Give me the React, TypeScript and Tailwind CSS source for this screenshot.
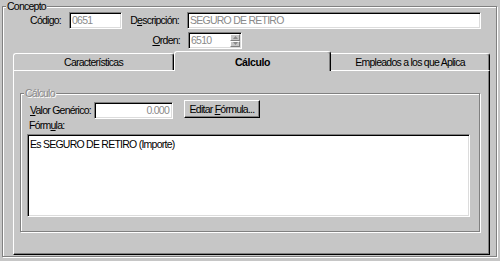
import React from "react";

const font = { fontFamily: '"Liberation Sans", Arial, sans-serif' };

function Sunken({ className = "", children }: { className?: string; children?: React.ReactNode }) {
  return (
    <div
      className={
        "border border-t-[#808080] border-l-[#808080] border-b-white border-r-white shadow-[inset_1px_1px_0_#000,inset_-1px_-1px_0_#dcdcdc] " +
        className
      }
    >
      {children}
    </div>
  );
}

function U({ children }: { children: React.ReactNode }) {
  return <span className="underline underline-offset-[1px]">{children}</span>;
}

export default function App() {
  return (
    <div
      className="w-[500px] h-[261px] bg-[#c6c6c6] pt-[6px] pl-[2px] overflow-hidden text-[10.5px] tracking-[-0.75px] leading-[13px] text-black whitespace-nowrap"
      style={font}
    >
      <div className="relative w-[495px] h-[251px] border border-[#808080] shadow-[1px_1px_0_#fff,inset_1px_1px_0_#fff] pl-[2px]">
        <div className="absolute left-[3px] top-[-7px] bg-[#c6c6c6] px-[1px]">Concepto</div>

        {/* Row 1 */}
        <div className="flex items-center h-[17px] mt-[5px]">
          <div className="w-[56px] text-right">Código:</div>
          <Sunken className="ml-[8px] w-[53px] h-[17px] bg-white text-[#8a8a8a] pl-[2px] flex items-center">0651</Sunken>
          <div className="w-[57px] text-right">
            D<U>e</U>scripción:
          </div>
          <Sunken className="ml-[8px] w-[294px] h-[17px] bg-white text-[#8a8a8a] pl-[2px] flex items-center">
            SEGURO DE RETIRO
          </Sunken>
        </div>

        {/* Row 2 */}
        <div className="flex items-center h-[17px] mt-[3px]">
          <div className="w-[175px] text-right">
            <U>O</U>rden:
          </div>
          <Sunken className="ml-[8px] w-[54px] h-[17px] bg-white flex">
            <div className="flex-1 text-[#8a8a8a] pl-[2px] flex items-center">6510</div>
            <div className="w-[11px] flex flex-col py-[1px] pr-[1px]">
              <div className="flex-1 bg-[#c6c6c6] border border-t-white border-l-white border-b-[#808080] border-r-[#808080] flex items-center justify-center">
                <svg width="5" height="3" viewBox="0 0 5 3">
                  <path d="M2.5 0 L5 3 L0 3 Z" fill="#8a8a8a" />
                </svg>
              </div>
              <div className="flex-1 bg-[#c6c6c6] border border-t-white border-l-white border-b-[#808080] border-r-[#808080] flex items-center justify-center">
                <svg width="5" height="3" viewBox="0 0 5 3">
                  <path d="M0 0 L5 0 L2.5 3 Z" fill="#8a8a8a" />
                </svg>
              </div>
            </div>
          </Sunken>
        </div>

        {/* Tabs */}
        <div className="ml-[8px] mt-[2px]">
          <div className="flex items-end h-[19px] relative z-10">
            <div className="w-[161px] h-[17px] border-l border-t border-white rounded-tl-[3px] rounded-tr-[3px] border-r border-r-black shadow-[inset_-1px_0_0_#808080] flex items-center justify-center">
              Características
            </div>
            <div className="w-[157px] h-[20px] mb-[-1px] bg-[#c6c6c6] border-l border-t border-white rounded-tl-[3px] rounded-tr-[3px] border-r border-r-black shadow-[inset_-1px_0_0_#808080] flex items-center justify-center font-bold tracking-[-0.4px] pt-[1px]">
              Cálculo
            </div>
            <div className="w-[159px] h-[17px] border-t border-white rounded-tr-[3px] border-r border-r-black shadow-[inset_-1px_0_0_#808080] flex items-center justify-center">
              Empleados a los que Aplica
            </div>
          </div>
          <div className="w-[477px] h-[185px] border border-t-white border-l-white border-r-black border-b-black shadow-[inset_-1px_-1px_0_#808080] pt-[22px] pl-[6px]">
            {/* Cálculo group */}
            <div className="relative w-[460px] h-[139px] border border-[#808080] shadow-[1px_1px_0_#fff,inset_1px_1px_0_#fff]">
              <div className="absolute left-[3px] top-[-7px] bg-[#c6c6c6] px-[1px] text-[#8a8a8a] [text-shadow:1px_1px_0_#fff]">
                Cálculo
              </div>
              <div className="flex items-start h-[19px] mt-[6px] pl-[9px]">
                <div className="w-[64px] mt-[4px]">
                  <U>V</U>alor Genérico:
                </div>
                <Sunken className="mt-[2px] w-[79px] h-[17px] bg-white text-[#8a8a8a] pr-[3px] flex items-center justify-end">
                  0.000
                </Sunken>
                <div className="ml-[11px] w-[76px] h-[18px] border border-t-white border-l-white border-r-black border-b-black shadow-[inset_-1px_-1px_0_#808080] flex items-center justify-center">
                  Editar&nbsp;<U>F</U>órmula...
                </div>
              </div>
              <div className="pl-[8px] h-[14px]">
                Fórm<U>u</U>la:
              </div>
              <Sunken className="ml-[6px] mt-[1px] w-[443px] h-[83px] bg-white pl-[2px] pt-[3px]">
                Es SEGURO DE RETIRO (Importe)
              </Sunken>
            </div>
          </div>
        </div>
      </div>
    </div>
  );
}
